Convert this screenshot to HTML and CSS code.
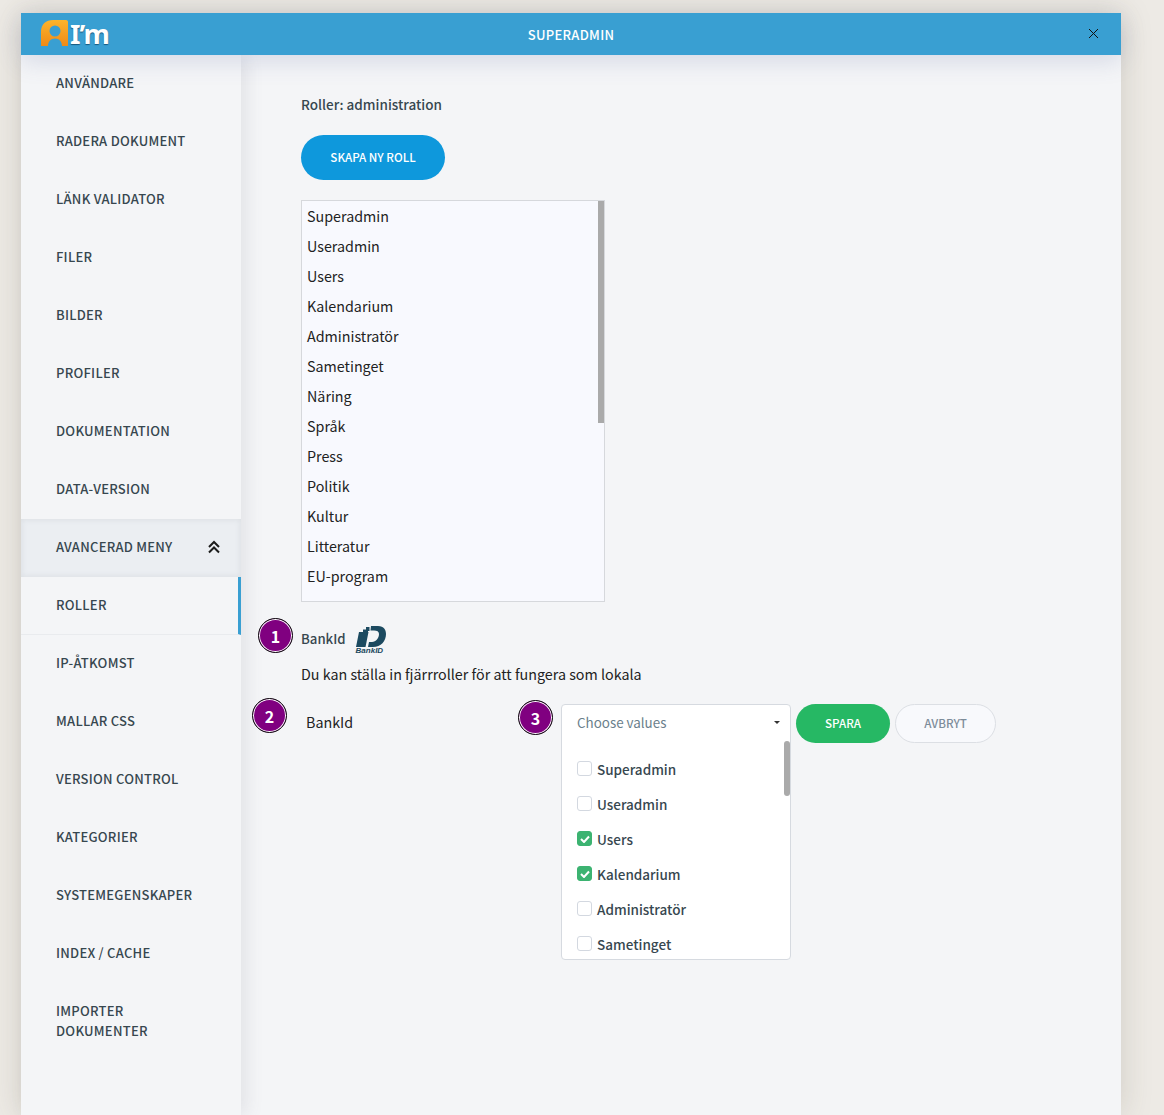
FILE: index.html
```html
<!DOCTYPE html>
<html>
<head>
    <title>Superadmin</title>
    <link rel="stylesheet" href="styles.css">
</head>
<body>
    <div class="modal">
        <div class="modal-header">
            <div class="logo">
                <svg width="28" height="27" viewBox="0 0 28 27">
                    <defs>
                        <linearGradient id="logo-orange" x1="0" y1="0" x2="0" y2="1">
                            <stop offset="0" stop-color="#fdb42a"/>
                            <stop offset="1" stop-color="#ee8a17"/>
                        </linearGradient>
                    </defs>
                    <path fill-rule="evenodd" d="M0 26 V12 C0 4 5 0 12 0 H25 C26.500 0 27 1 27 2 V26 H21 C21 22 18.500 18.500 14 18.500 C9.500 18.500 7 22 7 26 Z M14 5.500 A5.500 5.500 0 1 0 14 16.500 A5.500 5.500 0 1 0 14 5.500 Z" fill="url(#logo-orange)"/>
                </svg>
                <span class="logo-text">I’m</span>
            </div>
            <div class="modal-title">SUPERADMIN</div>
            <svg class="close-icon" width="11" height="11" viewBox="0 0 11 11">
                <path d="M1 1 L10 10 M10 1 L1 10" stroke="#111" stroke-width="1" fill="none"/>
            </svg>
        </div>
        <div class="modal-body">
            <div class="sidebar">
                <div class="menu-item">ANVÄNDARE</div>
                <div class="menu-item">RADERA DOKUMENT</div>
                <div class="menu-item">LÄNK VALIDATOR</div>
                <div class="menu-item">FILER</div>
                <div class="menu-item">BILDER</div>
                <div class="menu-item">PROFILER</div>
                <div class="menu-item">DOKUMENTATION</div>
                <div class="menu-item">DATA-VERSION</div>
                <div class="menu-item menu-advanced">
                    AVANCERAD MENY
                    <svg width="14" height="14" viewBox="0 0 14 14">
                        <path d="M2 7 L7 2 L12 7 M2 12.500 L7 7.500 L12 12.500" stroke="#1c1c1c" stroke-width="2" fill="none"/>
                    </svg>
                </div>
                <div class="menu-item menu-active">ROLLER</div>
                <div class="menu-item">IP-ÅTKOMST</div>
                <div class="menu-item">MALLAR CSS</div>
                <div class="menu-item">VERSION CONTROL</div>
                <div class="menu-item">KATEGORIER</div>
                <div class="menu-item">SYSTEMEGENSKAPER</div>
                <div class="menu-item">INDEX / CACHE</div>
                <div class="menu-item menu-double">IMPORTER<br>DOKUMENTER</div>
            </div>
            <div class="content">
                <div class="page-title">Roller: administration</div>
                <button type="button" class="btn btn-create">SKAPA NY ROLL</button>
                <div class="role-list">
                    <div class="role-items">
                        <div class="role">Superadmin</div>
                        <div class="role">Useradmin</div>
                        <div class="role">Users</div>
                        <div class="role">Kalendarium</div>
                        <div class="role">Administratör</div>
                        <div class="role">Sametinget</div>
                        <div class="role">Näring</div>
                        <div class="role">Språk</div>
                        <div class="role">Press</div>
                        <div class="role">Politik</div>
                        <div class="role">Kultur</div>
                        <div class="role">Litteratur</div>
                        <div class="role">EU-program</div>
                    </div>
                    <div class="role-scroll"><div class="role-thumb"></div></div>
                </div>
                <div class="bankid-row">
                    <span class="bankid-label">BankId</span>
                    <div class="bankid-logo">
                        <svg width="30" height="21" viewBox="0 0 30 21">
                            <path d="M3 6 H7 V3.500 H10 V1 H13.500 V5 H12 V6 H12.500 L9.500 21 H0 Z" fill="#1c4a60"/>
                            <path d="M15 0 H22 C28 0 30 4 30 8 C30 15 25 21 17 21 H12 L13 16 H16 C20 16 23 12 23 8 C23 5.500 21 4.500 18 4.500 H14.500 Z" fill="#1c4a60"/>
                        </svg>
                        <span class="bankid-word">BankID</span>
                    </div>
                </div>
                <div class="help-text">Du kan ställa in fjärrroller för att fungera som lokala</div>
                <div class="mapping-row">
                    <div class="mapping-name">BankId</div>
                    <div class="multi-select">
                        <div class="multi-head">
                            <span>Choose values</span>
                            <span class="caret"></span>
                        </div>
                        <div class="multi-options">
                            <div class="option"><span class="check"></span>Superadmin</div>
                            <div class="option"><span class="check"></span>Useradmin</div>
                            <div class="option"><span class="check checked"><svg width="10" height="8" viewBox="0 0 10 8"><path d="M1 4 L4 7 L9 1.500" stroke="#fff" stroke-width="2" fill="none"/></svg></span>Users</div>
                            <div class="option"><span class="check checked"><svg width="10" height="8" viewBox="0 0 10 8"><path d="M1 4 L4 7 L9 1.500" stroke="#fff" stroke-width="2" fill="none"/></svg></span>Kalendarium</div>
                            <div class="option"><span class="check"></span>Administratör</div>
                            <div class="option"><span class="check"></span>Sametinget</div>
                            <div class="multi-thumb"></div>
                        </div>
                    </div>
                    <button type="button" class="btn btn-save">SPARA</button>
                    <button type="button" class="btn btn-cancel">AVBRYT</button>
                </div>
                <div class="badge badge-one">1</div>
                <div class="badge badge-two">2</div>
                <div class="badge badge-three">3</div>
            </div>
        </div>
    </div>
</body>
</html>
```

FILE: styles.css
```css
* {
    box-sizing: border-box;
}

html,
body {
    height: 100%;
}

body {
    margin: 0;
    overflow: hidden;
    background: #edeae5;
    color: #37474f;
    font-family: "Noto Sans CJK SC", "Noto Sans", sans-serif;
    font-size: 14.300px;
}

.modal {
    width: 1100px;
    height: 1102px;
    margin: 13px 0 0 21px;
    background: #f4f5f7;
    box-shadow: 0 0 30px rgba(80, 70, 50, 0.18);
}

.modal-header {
    position: relative;
    z-index: 2;
    display: flex;
    align-items: center;
    justify-content: center;
    height: 42px;
    background: #399fd2;
    box-shadow: 0 6px 24px rgba(70, 90, 150, 0.18);
}

.logo {
    position: absolute;
    left: 20px;
    top: 7px;
    display: flex;
    align-items: flex-end;
    height: 27px;
}

.logo-text {
    margin-left: 1px;
    color: #fff;
    font-family: "Noto Sans", sans-serif;
    font-size: 27px;
    font-weight: 700;
    line-height: 27px;
    letter-spacing: -1px;
    text-shadow: 0 1px 1px rgba(0, 40, 70, 0.6);
}

.modal-title {
    color: #fff;
    font-size: 13px;
    font-weight: 500;
    letter-spacing: 0.3px;
}

.close-icon {
    position: absolute;
    right: 22px;
    top: 15px;
}

.modal-body {
    display: flex;
    height: 1060px;
}

.sidebar {
    width: 220px;
    flex-shrink: 0;
    background: #f4f5f7;
    box-shadow: 6px 0 16px rgba(90, 90, 110, 0.11);
}

.menu-item {
    display: flex;
    align-items: center;
    height: 58px;
    padding: 0 0 2px 35px;
    color: #37474f;
    font-size: 13px;
    font-weight: 500;
    line-height: 20px;
    letter-spacing: 0.25px;
}

.menu-double {
    height: 78px;
}

.menu-advanced {
    justify-content: space-between;
    padding-right: 20px;
    background: #ebeef2;
    box-shadow: inset 0 0 6px rgba(90, 100, 110, 0.12);
}

.menu-active {
    border-right: 3px solid #399fd2;
    border-bottom: 1px solid #e9ebee;
}

.content {
    position: relative;
    flex: 1;
    padding: 39px 0 0 60px;
}

.page-title {
    height: 21px;
    font-size: 13.500px;
    font-weight: 500;
    line-height: 20px;
}

.btn {
    display: block;
    height: 39px;
    padding: 0 0 2px;
    border: none;
    border-radius: 23px;
    color: #fff;
    font-family: inherit;
    font-size: 11.600px;
    font-weight: 500;
}

.btn-create {
    width: 144px;
    height: 45px;
    margin-top: 20px;
    background: #0e98dc;
}

.role-list {
    position: relative;
    width: 304px;
    height: 402px;
    margin-top: 20px;
    border: 1px solid #d6d8dc;
    background: #f8f9fe;
    overflow: hidden;
}

.role {
    height: 30px;
    padding-left: 5px;
    color: #222;
    line-height: 30px;
}

.role-scroll {
    position: absolute;
    top: 0;
    right: 0;
    width: 6px;
    height: 100%;
}

.role-thumb {
    height: 222px;
    background: #aaaaaa;
}

.bankid-row {
    display: flex;
    align-items: flex-start;
    height: 37px;
    margin-top: 24px;
}

.bankid-label {
    margin-top: 3px;
    font-size: 13.200px;
    font-weight: 500;
    line-height: 20px;
}

.bankid-logo {
    width: 32px;
    margin-left: 10px;
    color: #1c4a60;
}

.bankid-logo svg {
    display: block;
}

.bankid-word {
    display: block;
    font-family: "Liberation Sans", sans-serif;
    font-size: 8px;
    font-style: italic;
    font-weight: 700;
    line-height: 8px;
}

.help-text {
    height: 22px;
    color: #222;
    line-height: 22px;
}

.mapping-row {
    display: flex;
    align-items: flex-start;
    margin-top: 19px;
}

.mapping-name {
    width: 260px;
    padding-left: 5px;
    color: #222;
    line-height: 36px;
}

.multi-select {
    width: 230px;
    height: 256px;
    border: 1px solid #d6dae0;
    border-radius: 4px;
    background: #fff;
}

.multi-head {
    display: flex;
    align-items: center;
    justify-content: space-between;
    height: 36px;
    padding: 0 10px 2px 15px;
    color: #6b7f8c;
    font-size: 13.400px;
}

.caret {
    border-top: 3px solid #333;
    border-left: 3px solid transparent;
    border-right: 3px solid transparent;
}

.multi-options {
    position: relative;
    padding-top: 10px;
}

.multi-thumb {
    position: absolute;
    top: 0;
    right: 0;
    width: 6px;
    height: 55px;
    border-radius: 3px;
    background: #aaaaaa;
}

.option {
    display: flex;
    align-items: center;
    height: 35px;
    padding-left: 15px;
    color: #37474f;
    font-size: 13.500px;
    font-weight: 500;
}

.check {
    display: flex;
    align-items: center;
    justify-content: center;
    width: 15px;
    height: 15px;
    margin-right: 5px;
    border: 1px solid #d3d8e0;
    border-radius: 3px;
    background: #fff;
}

.check.checked {
    border-color: #3cb371;
    background: #3cb371;
}

.btn-save {
    width: 94px;
    margin-left: 5px;
    background: #26b864;
}

.btn-cancel {
    width: 101px;
    margin-left: 5px;
    border: 1px solid #dcdfe4;
    background: #f8f9fc;
    color: #7d8c9a;
}

.badge {
    position: absolute;
    display: flex;
    align-items: center;
    justify-content: center;
    width: 35px;
    height: 35px;
    border: 1px solid #111;
    border-radius: 50%;
    background: #800080;
    box-shadow: inset 0 0 0 1px #fff;
    color: #fff;
    font-size: 16px;
    font-weight: 700;
}

.badge-one {
    left: 17px;
    top: 563px;
}

.badge-two {
    left: 11px;
    top: 643px;
}

.badge-three {
    left: 277px;
    top: 645px;
}
```
